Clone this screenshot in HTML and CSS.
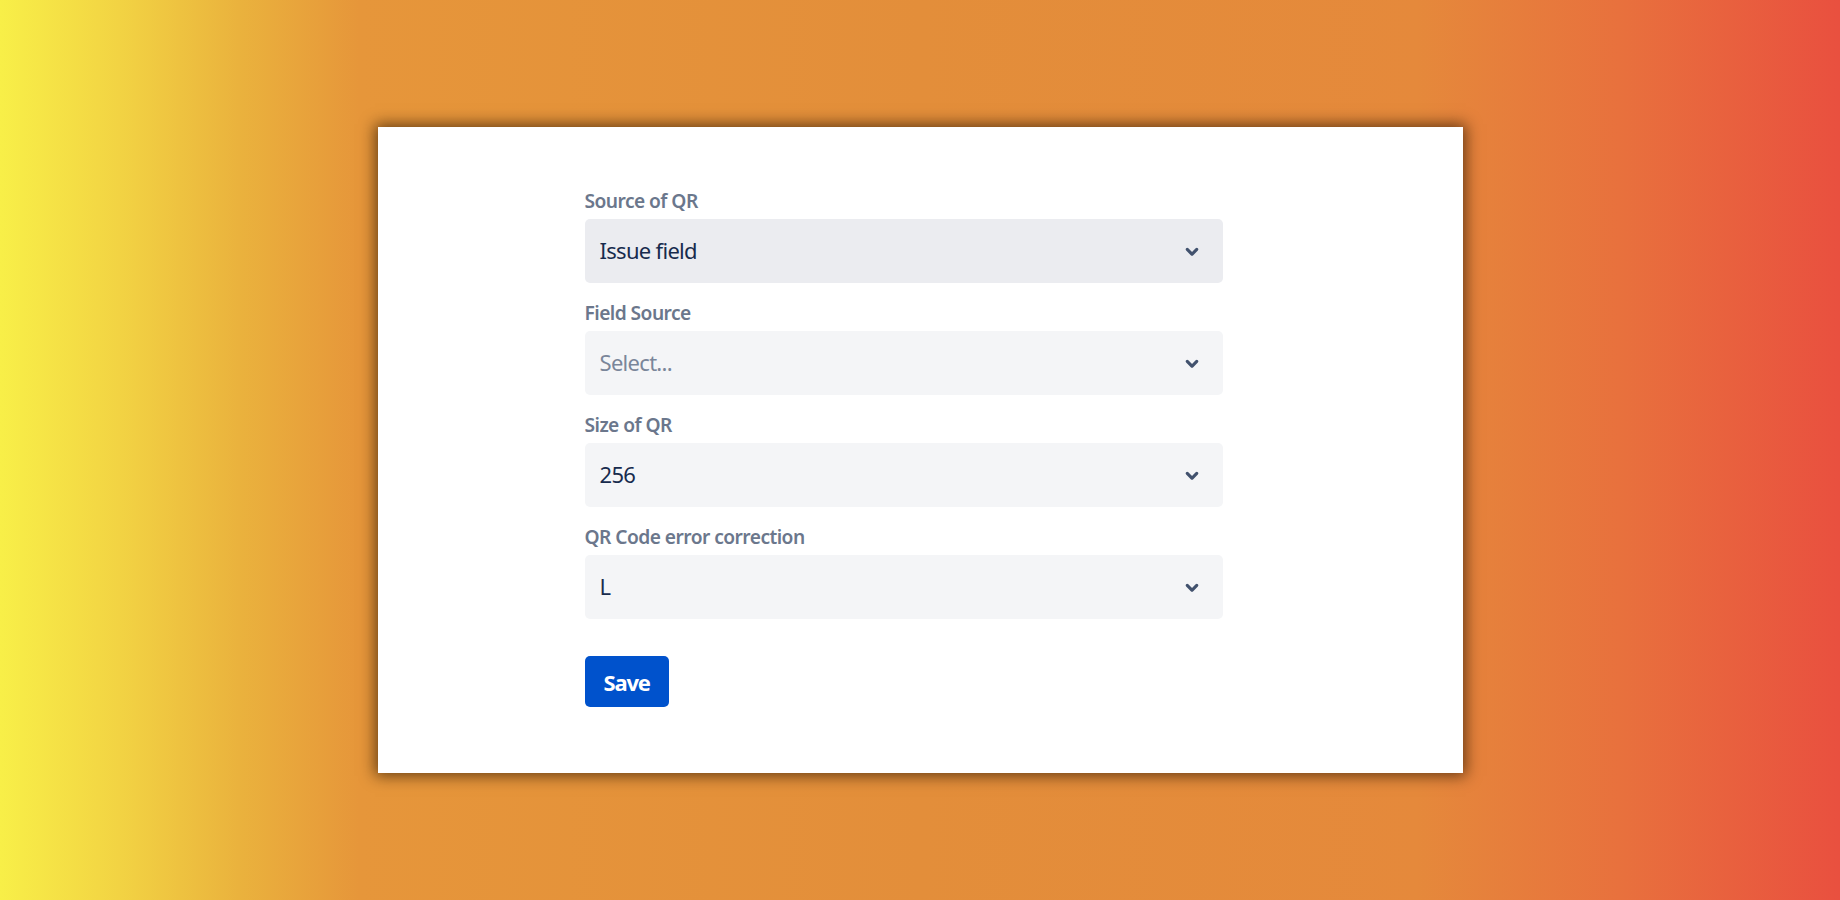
FILE: index.html
```html
<!DOCTYPE html>
<html lang="en">
<head>
<meta charset="utf-8">
<title>QR settings</title>
<link rel="stylesheet" href="styles.css">
</head>
<body>
<main class="stage">
  <section class="card">
    <form class="form">
      <div class="field">
        <label class="label">Source of QR</label>
        <div class="select select--active">
          <span class="value">Issue field</span>
          <span class="indicator"><svg viewBox="0 0 24 24" width="38" height="38"><path fill="#42526E" d="M8.292 10.293a1.009 1.009 0 0 0 0 1.419l2.939 2.965c.218.215.5.322.779.322s.556-.107.769-.322l2.93-2.955a1.01 1.01 0 0 0 0-1.419.987.987 0 0 0-1.406 0l-2.298 2.317-2.307-2.327a.99.99 0 0 0-1.406 0z"/></svg></span>
        </div>
      </div>
      <div class="field">
        <label class="label">Field Source</label>
        <div class="select">
          <span class="value placeholder">Select...</span>
          <span class="indicator"><svg viewBox="0 0 24 24" width="38" height="38"><path fill="#42526E" d="M8.292 10.293a1.009 1.009 0 0 0 0 1.419l2.939 2.965c.218.215.5.322.779.322s.556-.107.769-.322l2.93-2.955a1.01 1.01 0 0 0 0-1.419.987.987 0 0 0-1.406 0l-2.298 2.317-2.307-2.327a.99.99 0 0 0-1.406 0z"/></svg></span>
        </div>
      </div>
      <div class="field">
        <label class="label">Size of QR</label>
        <div class="select">
          <span class="value">256</span>
          <span class="indicator"><svg viewBox="0 0 24 24" width="38" height="38"><path fill="#42526E" d="M8.292 10.293a1.009 1.009 0 0 0 0 1.419l2.939 2.965c.218.215.5.322.779.322s.556-.107.769-.322l2.93-2.955a1.01 1.01 0 0 0 0-1.419.987.987 0 0 0-1.406 0l-2.298 2.317-2.307-2.327a.99.99 0 0 0-1.406 0z"/></svg></span>
        </div>
      </div>
      <div class="field">
        <label class="label">QR Code error correction</label>
        <div class="select">
          <span class="value">L</span>
          <span class="indicator"><svg viewBox="0 0 24 24" width="38" height="38"><path fill="#42526E" d="M8.292 10.293a1.009 1.009 0 0 0 0 1.419l2.939 2.965c.218.215.5.322.779.322s.556-.107.769-.322l2.93-2.955a1.01 1.01 0 0 0 0-1.419.987.987 0 0 0-1.406 0l-2.298 2.317-2.307-2.327a.99.99 0 0 0-1.406 0z"/></svg></span>
        </div>
      </div>
      <div class="actions">
        <button type="button" class="btn">Save</button>
      </div>
    </form>
  </section>
</main>
</body>
</html>
```

FILE: styles.css
```css
* { box-sizing: border-box; }

html, body {
  margin: 0;
  padding: 0;
  height: 100%;
}

body {
  font-family: "Noto Sans", "Open Sans", "Liberation Sans", sans-serif;
  background: linear-gradient(to right,
    #f8ef48 0%,
    #f2d343 6.5%,
    #eab23d 13%,
    #e6963a 19.5%,
    #e38e3a 50%,
    #e5893b 77%,
    #e8713d 88%,
    #e9503f 100%);
}

.stage {
  height: 100%;
  display: flex;
  align-items: center;
  justify-content: center;
}

.card {
  width: 1085px;
  background: #fff;
  padding: 63px 0 66px 207px;
  box-shadow: 0 0 14px 3px rgba(40, 20, 0, 0.65);
}

.form {
  width: 638px;
  display: flex;
  flex-direction: column;
  gap: 19px;
}

.field {
  display: flex;
  flex-direction: column;
}

.label {
  font-size: 19.2px;
  line-height: 22px;
  font-weight: 600;
  letter-spacing: -0.55px;
  color: #6b778c;
  margin-bottom: 7px;
}

.select {
  height: 64px;
  background: #f4f5f7;
  border-radius: 5px;
  display: flex;
  align-items: center;
  padding: 0 12px 2px 15px;
}

.select--active {
  background: #ebecf0;
}

.value {
  flex: 1;
  font-size: 22px;
  letter-spacing: -0.7px;
  color: #172b4d;
}

.placeholder {
  color: #7a869a;
}

.indicator {
  display: flex;
  width: 38px;
  height: 38px;
  margin-top: 2px;
}

.actions {
  margin-top: 18px;
}

.btn {
  height: 51px;
  padding: 0 19px;
  border: 0;
  border-radius: 5px;
  background: #0052cc;
  color: #fff;
  font-family: inherit;
  font-size: 22px;
  font-weight: 700;
  letter-spacing: -1.2px;
  cursor: pointer;
}
```
